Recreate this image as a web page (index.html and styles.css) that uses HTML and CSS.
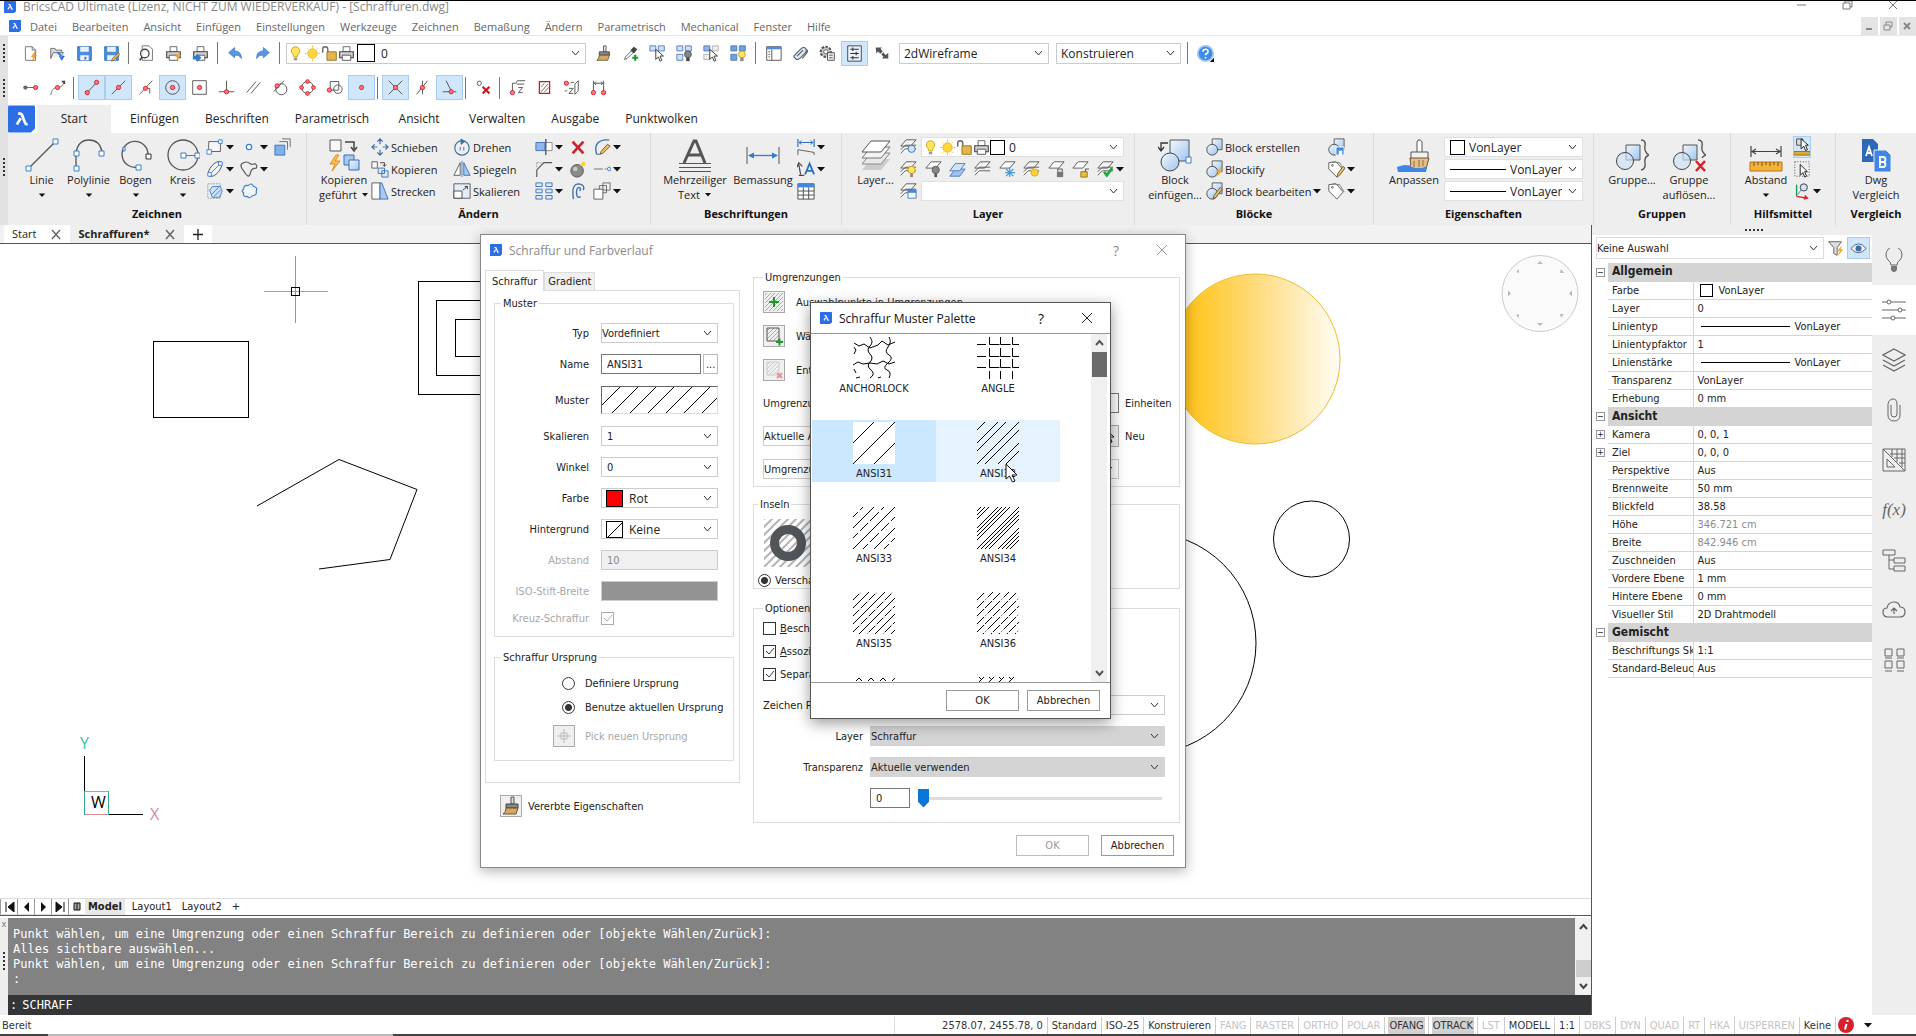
FILE: index.html
```html
<!doctype html>
<html lang="de">
<head>
    <meta charset="utf-8">
    <meta content="width=device-width,initial-scale=1" name="viewport">
    <title>BricsCAD Ultimate - [Schraffuren.dwg]</title>
    <link rel="stylesheet" href="styles.css">
</head>
<body>
<svg class="defs" aria-hidden="true">
    <defs>
        <linearGradient id="gold"><stop offset="0" stop-color="#ffbf0a"/><stop offset=".25" stop-color="#ffcc3c"/><stop offset=".6" stop-color="#fee194"/><stop offset="1" stop-color="#fffdf6"/></linearGradient>
        <linearGradient id="blue" x1="0" y1="0" x2="1" y2="1"><stop offset="0" stop-color="#f2f7fd"/><stop offset="1" stop-color="#9fc4f0"/></linearGradient>
        <pattern id="p-wide" width="18" height="18" patternUnits="userSpaceOnUse"><path d="M0 18L18 0M-1 1L1-1M17 19L19 17" stroke="#000"/></pattern>
        <pattern id="p31" width="21" height="21" patternUnits="userSpaceOnUse"><path d="M0 21L21 0M-1 1L1-1M20 22L22 20" stroke="#000"/></pattern>
        <pattern id="p32" width="21" height="21" patternUnits="userSpaceOnUse"><path d="M0 21L21 0M-1 1L1-1M20 22L22 20M0 8L8 0M8 21L21 8" stroke="#000"/></pattern>
        <pattern id="p33" width="21" height="21" patternUnits="userSpaceOnUse"><path d="M0 21L21 0M-1 1L1-1M20 22L22 20" stroke="#000"/><path d="M0 10L10 0M10 21L21 10" stroke="#000" stroke-dasharray="7 3"/></pattern>
        <pattern id="p34" width="21" height="21" patternUnits="userSpaceOnUse"><path d="M0 21L21 0M-1 1L1-1M20 22L22 20M0 4L4 0M4 21L21 4M0 8L8 0M8 21L21 8M0 12L12 0M12 21L21 12" stroke="#000"/></pattern>
        <pattern id="p35" width="16" height="16" patternUnits="userSpaceOnUse"><path d="M0 16L16 0M-1 1L1-1M15 17L17 15" stroke="#000"/><path d="M0 8L8 0M8 16L16 8" stroke="#000" stroke-dasharray="9 2"/></pattern>
        <pattern id="p36" width="16" height="16" patternUnits="userSpaceOnUse"><path d="M0 16L16 0M0 8L8 0M8 16L16 8" stroke="#000" stroke-dasharray="10 2 1 2"/></pattern>
        <pattern id="p37" width="12" height="12" patternUnits="userSpaceOnUse"><path d="M3 4L6 1L9 4" fill="none" stroke="#000"/></pattern>
        <pattern id="p38" width="10" height="10" patternUnits="userSpaceOnUse"><path d="M2 5L7 0M2 0L5 3" stroke="#000"/></pattern>
        <pattern id="grayhatch" width="8" height="8" patternUnits="userSpaceOnUse"><path d="M0 8L8 0M-1 1L1-1M7 9L9 7" stroke="#b4b4b4" stroke-width="2"/></pattern>
        <pattern id="finehatch" width="4" height="4" patternUnits="userSpaceOnUse"><path d="M0 4L4 0" stroke="#999" stroke-width=".8"/></pattern>
    </defs>
    <symbol id="logo" viewBox="0 0 20 20"><path d="M1 0h18a1 1 0 0 1 1 1v16l-3 3H1a1 1 0 0 1-1-1V1a1 1 0 0 1 1-1z" fill="#2c6ee6"/><path d="M7.500 6h1.500q1 0 1.400 1L12.500 12.500q.4 1.500 2 1.500M9.500 9.500L6.500 14" fill="none" stroke="#fff" stroke-width="2"/></symbol>
    <symbol id="car" viewBox="0 0 8 20"><path d="M0 8h8l-4 4.500z" fill="#111"/></symbol>
    <symbol id="new" viewBox="0 0 20 20"><path d="M4 2h8l4 4v12H4z" fill="#fff" stroke="#666"/><path d="M12 2v4h4" fill="none" stroke="#666"/><path d="M15 8l-4 6h3l-2 5 5-7h-3l3-4z" fill="#f5a623" stroke="#d9822b" stroke-width=".6"/></symbol>
    <symbol id="open" viewBox="0 0 20 20"><path d="M2 16V4h5l1 2h7v3" fill="#d8d8d8" stroke="#666"/><path d="M2 16l3-7h12l-2 3" fill="#eee" stroke="#666"/><path d="M9 9q5-1 6 6m-3-2l3 5 3-5z" fill="#2f7bd8" stroke="#2f7bd8"/></symbol>
    <symbol id="save" viewBox="0 0 20 20"><path d="M2 2h16v16H2z" fill="#4c8edb" stroke="#2464b4"/><path d="M5 2h10v6H5zM5 12h10v6H5z" fill="#e9f2fc"/><path d="M11 14v3" stroke="#2464b4" stroke-width="2"/></symbol>
    <symbol id="saveas" viewBox="0 0 20 20"><path d="M2 2h16v16H2z" fill="#4c8edb" stroke="#2464b4"/><path d="M5 2h10v6H5zM5 12h10v6H5z" fill="#e9f2fc"/><path d="M18 9l-7 7-1 3 3-1 7-7z" fill="#f0b040" stroke="#555" stroke-width=".8"/></symbol>
    <symbol id="preview" viewBox="0 0 20 20"><path d="M5 1h8l4 4v13H5z" fill="#fff" stroke="#666"/><circle cx="8" cy="10" r="5" fill="#fffc" stroke="#444" stroke-width="1.500"/><path d="M5 14l-3 4" stroke="#444" stroke-width="2"/></symbol>
    <symbol id="print" viewBox="0 0 20 20"><path d="M6 2h8v6H6z" fill="#fff" stroke="#555"/><path d="M2 8h16v7H2z" fill="#d4d4d4" stroke="#444" stroke-width="1.300"/><path d="M5 12h10v6H5z" fill="#fff" stroke="#444"/></symbol>
    <symbol id="printf" viewBox="0 0 20 20"><use href="#print"/><path d="M17 8l-5 6h3l-2 5 6-7h-3l2-4z" fill="#f5a623"/></symbol>
    <symbol id="printx" viewBox="0 0 20 20"><use href="#print"/><path d="M1 13h5v-3l5 5-5 5v-3H1z" fill="#2f7bd8"/></symbol>
    <symbol id="undo" viewBox="0 0 20 20"><path d="M2 9l7-6v4q8 0 8 9-3-5-8-4v3z" fill="#5b97e0" stroke="#2f6ac0" stroke-width=".8"/></symbol>
    <symbol id="redo" viewBox="0 0 20 20"><path d="M18 9l-7-6v4q-8 0-8 9 3-5 8-4v3z" fill="#5b97e0" stroke="#2f6ac0" stroke-width=".8"/></symbol>
    <symbol id="bulb" viewBox="0 0 20 20"><path d="M10 2a5 5 0 0 0-3 9l1 3h4l1-3a5 5 0 0 0-3-9z" fill="#ffe45c" stroke="#c79a13"/><path d="M8 15h4v3H8z" fill="#999"/></symbol>
    <symbol id="sun" viewBox="0 0 20 20"><circle cx="10" cy="10" r="5.500" fill="#ffd83a" stroke="#e6a91a"/><path d="M10 1v2M10 17v2M1 10h2M17 10h2M4 4l1 1M15 15l1 1M16 4l-1 1M5 15l-1 1" stroke="#e6a91a"/></symbol>
    <symbol id="lock" viewBox="0 0 20 20"><path d="M2 9V5a3 3 0 0 1 6 0v4" fill="none" stroke="#666" stroke-width="1.600"/><path d="M7 8h11v10H7z" fill="#e6b64c" stroke="#8f6b1c"/></symbol>
    <symbol id="brush" viewBox="0 0 20 20"><path d="M10 1h3v7h-3z" fill="#ddd" stroke="#555"/><path d="M5 8h12v4H5z" fill="#888" stroke="#444"/><path d="M5 12h12l-2 6H2q3-2 3-6z" fill="#d9a860" stroke="#6a5530"/></symbol>
    <symbol id="drop" viewBox="0 0 20 20"><path d="M3 17l1-3 7-7 2 2-7 7z" fill="#fff" stroke="#555"/><path d="M10 6l4-4 4 3-4 5z" fill="#444"/><path d="M12 15h7M15.500 11.500v7" stroke="#1c9a2c" stroke-width="2.500"/></symbol>
    <symbol id="selq" viewBox="0 0 20 20"><path d="M1 1h7v6H1zM11 1h7v6h-7z" fill="#cfe0f5" stroke="#4a78b8"/><path d="M8 5v12l3-3 2 5 2-1-2-5h4z" fill="#fff" stroke="#222"/></symbol>
    <symbol id="selg" viewBox="0 0 20 20"><path d="M1 1h7v6H1z" fill="#8fb5e6" stroke="#4a78b8"/><path d="M11 1h7v6h-7zM1 11h7v6H1z" fill="#eee" stroke="#aaa"/><path d="M8 5v12l3-3 2 5 2-1-2-5h4z" fill="#fff" stroke="#222"/></symbol>
    <symbol id="selb" viewBox="0 0 20 20"><path d="M1 1h7v6H1zM11 1h7v6h-7zM1 11h7v7H1z" fill="#cfe0f5" stroke="#4a78b8"/><circle cx="14" cy="11" r="4" fill="#888" stroke="#444"/><path d="M12 15h4v4h-4z" fill="#444"/></symbol>
    <symbol id="sely" viewBox="0 0 20 20"><path d="M1 1h7v6H1zM11 1h7v6h-7zM1 11h7v7H1z" fill="#6fa1e0" stroke="#4a78b8"/><circle cx="14" cy="11" r="4" fill="#ffe45c" stroke="#c79a13"/><path d="M12 15h4v4h-4z" fill="#888"/></symbol>
    <symbol id="pane" viewBox="0 0 20 20"><path d="M2 2h17v16H2z" fill="#fff" stroke="#444"/><path d="M2 2h17v3H2z" fill="#4c8edb"/><path d="M8 5v13M4 8h2M4 11h2M4 14h2" stroke="#444"/></symbol>
    <symbol id="clip" viewBox="0 0 20 20"><path d="M2 13l9-9q3-2 5 0t0 5l-7 7q-3 2-5 0t-2-3zM6 13l7-7M16 5q4 1 1 5l-5 6" fill="#dbe8f8" stroke="#555" stroke-width="1.200"/></symbol>
    <symbol id="gear" viewBox="0 0 20 20"><circle cx="8" cy="8" r="6" fill="#ccc" stroke="#555" stroke-width="2.500" stroke-dasharray="3 1.500"/><circle cx="8" cy="8" r="2.500" fill="#fff" stroke="#555"/><path d="M10 9h8v9h-8zM12 12h4M12 15h4" fill="#eee" stroke="#444"/></symbol>
    <symbol id="sett" viewBox="0 0 20 20"><path d="M2 1h16v18H2z" fill="#e9f3fd" stroke="#333"/><path d="M5 5h10M5 10h10M5 15h10M8 3v4M12 8v4M8 13v4" stroke="#333" stroke-width="1.300"/></symbol>
    <symbol id="full" viewBox="0 0 20 20"><path d="M1 2h9L8 4l3 4-3 3-4-3-2 3zM19 18h-9l2-3-3-3 3-3 3 4 4-3z" fill="#555"/></symbol>
    <symbol id="help" viewBox="0 0 20 20"><circle cx="10" cy="10" r="9" fill="#3d8bea" stroke="#9cc6f7" stroke-width="2"/><path d="M7 8q0-3 3-3t3 2.500q0 2-3 3.500v1M10 14v2" fill="none" stroke="#fff" stroke-width="2"/><path d="M20 15v5h-5z" fill="#111"/></symbol>
    <!-- snap icons -->
    <symbol id="s1" viewBox="0 0 20 20"><path d="M5 10h10" stroke="#555"/><circle cx="4" cy="10" r="2.500" fill="#666"/><circle cx="16" cy="10" r="2.500" fill="#f77" stroke="#d01525"/></symbol>
    <symbol id="s2" viewBox="0 0 20 20"><path d="M2 19q1-9 8-9 7 0 8-8" fill="none" stroke="#666"/><circle cx="10" cy="10" r="2.500" fill="#f77" stroke="#d01525"/><path d="M15 3h3v3" fill="none" stroke="#444" stroke-width="2"/></symbol>
    <symbol id="s3" viewBox="0 0 20 20"><path d="M5 16L16 4" stroke="#444"/><circle cx="5" cy="16" r="2.500" fill="#f77" stroke="#d01525"/><circle cx="16" cy="4" r="2.500" fill="#f77" stroke="#d01525"/></symbol>
    <symbol id="s4" viewBox="0 0 20 20"><path d="M2 18L18 2" stroke="#444"/><circle cx="10" cy="10" r="2.500" fill="#f77" stroke="#d01525"/></symbol>
    <symbol id="s5" viewBox="0 0 20 20"><path d="M3 18L18 2M10 11h5v6" fill="none" stroke="#444"/><circle cx="10" cy="11" r="2.500" fill="#f77" stroke="#d01525"/></symbol>
    <symbol id="s6" viewBox="0 0 20 20"><circle cx="10" cy="10" r="8" fill="none" stroke="#444"/><circle cx="10" cy="10" r="2.500" fill="#f77" stroke="#d01525"/></symbol>
    <symbol id="s7" viewBox="0 0 20 20"><path d="M2 2h16v16H2z" fill="none" stroke="#444"/><circle cx="10" cy="10" r="2.500" fill="#f77" stroke="#d01525"/></symbol>
    <symbol id="s8" viewBox="0 0 20 20"><path d="M10 2v12M1 15h18" stroke="#444"/><circle cx="10" cy="15" r="2.500" fill="#f77" stroke="#d01525"/></symbol>
    <symbol id="s9" viewBox="0 0 20 20"><path d="M2 16L13 3M7 17L18 4" stroke="#444"/></symbol>
    <symbol id="s10" viewBox="0 0 20 20"><circle cx="11" cy="12" r="6.500" fill="none" stroke="#444"/><path d="M2 15L14 2" stroke="#444"/><circle cx="6" cy="8" r="2.500" fill="#f77" stroke="#d01525"/></symbol>
    <symbol id="s11" viewBox="0 0 20 20"><circle cx="10" cy="10" r="7" fill="none" stroke="#444"/><g fill="#f77" stroke="#d01525"><circle cx="10" cy="3" r="2.200"/><circle cx="10" cy="17" r="2.200"/><circle cx="3" cy="10" r="2.200"/><circle cx="17" cy="10" r="2.200"/></g></symbol>
    <symbol id="s12" viewBox="0 0 20 20"><path d="M5 3h10v10H5z" fill="none" stroke="#444"/><circle cx="14" cy="12" r="5" fill="none" stroke="#444"/><circle cx="4" cy="13" r="2.500" fill="#f77" stroke="#d01525"/></symbol>
    <symbol id="s13" viewBox="0 0 20 20"><circle cx="10" cy="10" r="2.500" fill="#f77" stroke="#d01525"/></symbol>
    <symbol id="s14" viewBox="0 0 20 20"><path d="M2 2l16 16M18 2L2 18" stroke="#444"/><circle cx="10" cy="10" r="2.500" fill="#f77" stroke="#d01525"/></symbol>
    <symbol id="s15" viewBox="0 0 20 20"><path d="M3 18L16 2M10 2v16" stroke="#444"/><circle cx="10" cy="10" r="2.500" fill="#f77" stroke="#d01525"/></symbol>
    <symbol id="s16" viewBox="0 0 20 20"><path d="M6 2l6 12M2 15h8M15 15h3" stroke="#444"/><circle cx="12" cy="15" r="2.500" fill="#f77" stroke="#d01525"/></symbol>
    <symbol id="s17" viewBox="0 0 20 20"><circle cx="5" cy="5" r="2.500" fill="none" stroke="#444"/><path d="M9 9l8 8M17 9l-8 8" stroke="#d01525" stroke-width="2.500"/></symbol>
    <symbol id="s18" viewBox="0 0 20 20"><path d="M4 17V5M4 5h4l2-3h9M9 6h9M11 10h5l-5 6h5" fill="none" stroke="#444"/><circle cx="4" cy="16" r="2.500" fill="#f77" stroke="#d01525"/></symbol>
    <symbol id="s19" viewBox="0 0 20 20"><path d="M4 3h12v14H4z" fill="none" stroke="#d01525" stroke-width="1.500"/><path d="M6 15L14 6M6 9l4-4M10 15l5-5" stroke="#555"/></symbol>
    <symbol id="s20" viewBox="0 0 20 20"><circle cx="4" cy="5" r="2.500" fill="#f77" stroke="#d01525"/><path d="M9 4h4M18 2v12l-4 4V6zM7 11h5l-5 6h5M2 14h3" fill="none" stroke="#444"/></symbol>
    <symbol id="s21" viewBox="0 0 20 20"><path d="M4 2v12M16 2v12M5 5h10M7 3L5 5l2 2M13 3l2 2-2 2" fill="none" stroke="#444"/><circle cx="4" cy="16" r="2.500" fill="#f77" stroke="#d01525"/><circle cx="16" cy="16" r="2.500" fill="#f77" stroke="#d01525"/></symbol>
    <!-- big ribbon icons -->
    <symbol id="line" viewBox="0 0 34 34"><path d="M5 29L29 5" stroke="#555" stroke-width="1.300"/><path d="M1 28h5v5H1zM28 1h5v5h-5z" fill="#fff" stroke="#3b7dd0"/></symbol>
    <symbol id="poly" viewBox="0 0 34 34"><path d="M4 30V15Q6 2 17 2t13 12" fill="none" stroke="#555" stroke-width="1.300"/><path d="M2 28h5v5H2zM2 13h5v5H2zM27 13h5v5h-5z" fill="#fff" stroke="#3b7dd0"/></symbol>
    <symbol id="arc" viewBox="0 0 34 34"><path d="M19 29A13 13 0 1 1 29 17" fill="none" stroke="#555" stroke-width="1.300"/><path d="M27 16h5v5h-5z" fill="#fff" stroke="#333"/><path d="M17 27h5v5h-5zM4 9h2v4H4z" fill="#fff" stroke="#3b7dd0"/></symbol>
    <symbol id="circ" viewBox="0 0 34 34"><circle cx="17" cy="17" r="15" fill="none" stroke="#555" stroke-width="1.300"/><path d="M17 17.500h13" stroke="#3b7dd0"/><path d="M15 15h5v5h-5zM29 15h5v5h-5z" fill="#fff" stroke="#3b7dd0"/></symbol>
    <symbol id="gcopy" viewBox="0 0 34 34"><path d="M3 2h11v11H3z" fill="#f8f8f8" stroke="#555"/><path d="M18 4h9v7m-3-2l3 4 3-4" fill="none" stroke="#444" stroke-width="1.500"/><path d="M9 17l-6 9h5l-3 7 8-10H8l4-6z" fill="#ffc04a" stroke="#e8891c"/><path d="M17 17h10v10H17z" fill="#a9c9ef" stroke="#3b6fb8"/><path d="M22 22h10v10H22z" fill="url(#blue)" stroke="#3b6fb8"/></symbol>
    <symbol id="mtext" viewBox="0 0 34 34"><path d="M6 25L16 3h2l9 22M10 17h13" fill="none" stroke="#555" stroke-width="3"/><path d="M1 25.500h32M1 29.500h32M1 33.500h32" stroke="#555"/></symbol>
    <symbol id="dim" viewBox="0 0 34 34"><path d="M1 9v17M33 9v17" stroke="#555"/><path d="M3 17.500h28" stroke="#2f7bd8" stroke-width="1.300"/><path d="M2 17.500l6-3v6zM32 17.500l-6-3v6z" fill="#2f7bd8"/></symbol>
    <symbol id="layers" viewBox="0 0 34 34"><path d="M3 32L12 21H31L22 32z" fill="#ccc"/><path d="M3 26L12 15H31L22 26z" fill="#e8e8e8" stroke="#888"/><path d="M3 20L12 9H31L22 20z" fill="#f4f4f4" stroke="#777"/><path d="M3 14L12 3H31L22 14z" fill="#fff" stroke="#555"/></symbol>
    <symbol id="blk" viewBox="0 0 34 34"><path d="M12 2h19v21H12z" fill="url(#blue)" stroke="#555"/><circle cx="12" cy="24" r="9" fill="url(#blue)" stroke="#444"/><path d="M10 5H3v7M0 9l3 4 3-4" fill="none" stroke="#333" stroke-width="1.300"/><path d="M28 19h5v6h-5z" fill="#fff" stroke="#3b7dd0"/></symbol>
    <symbol id="match" viewBox="0 0 34 34"><path d="M21 2q3-1 4 2v11h-5V4z" fill="#fff" stroke="#555"/><path d="M14 14h17v8H14z" fill="#f2f2f2" stroke="#555"/><path d="M13 20h19l-3 11H12q3-5 1-11z" fill="#e6bf86" stroke="#6a5530"/><path d="M17 23v6M22 22v7M26 22v6" stroke="#8a6b3c"/><path d="M0 29q10-4 15 0 8 3 15-1l-1 6H1z" fill="#3f87e2"/></symbol>
    <symbol id="grp" viewBox="0 0 34 34"><path d="M11 7h14v15H11z" fill="url(#blue)" stroke="#555"/><circle cx="10" cy="23" r="8.500" fill="#cfe2f8aa" stroke="#444"/><path d="M26 2q5 0 4 6t4 9q-5 2-4 8t-4 7" fill="none" stroke="#555" stroke-width="1.400"/></symbol>
    <symbol id="ungrp" viewBox="0 0 34 34"><path d="M11 7h14v15H11z" fill="url(#blue)" stroke="#555"/><circle cx="10" cy="23" r="8.500" fill="#cfe2f8aa" stroke="#444"/><path d="M26 2q5 0 4 6t4 9q-3 1-4 3" fill="none" stroke="#555" stroke-width="1.400"/><path d="M24 23l9 10M33 23l-9 10" stroke="#d9222a" stroke-width="2.600"/></symbol>
    <symbol id="ruler" viewBox="0 0 34 34"><path d="M2 8v11M32 8v11M3 13.500h28M7 11l-4 2.500 4 2.500M27 11l4 2.500-4 2.500" fill="none" stroke="#444" stroke-width="1.200"/><path d="M1 24h32v9H1z" fill="#f3b23a" stroke="#b5761a"/><path d="M5 24v4M9 24v3M13 24v4M17 24v3M21 24v4M25 24v3M29 24v4" stroke="#7a4d0e"/></symbol>
    <symbol id="cmp" viewBox="0 0 34 34"><path d="M3 1h11l5 5v18H3z" fill="#2e69b8"/><path d="M15 12h12l5 5v17H15z" fill="#3f87e2" stroke="#eee"/><path d="M7 18l3-9 3 9M8 15h4" fill="none" stroke="#fff" stroke-width="1.800"/><path d="M21 19v10h3a2.500 2.500 0 0 0 0-5h-3 3a2.500 2.500 0 0 0 0-5z" fill="none" stroke="#fff" stroke-width="1.800"/></symbol>
    <!-- small ribbon icons -->
    <symbol id="rect" viewBox="0 0 20 20"><path d="M3 4h13v11H3z" fill="#f4f8fd" stroke="#555"/><path d="M1 13h5v5H1zM14 2h4v4h-4z" fill="#fff" stroke="#3b7dd0"/></symbol>
    <symbol id="pt" viewBox="0 0 20 20"><circle cx="10" cy="10" r="3" fill="#fff" stroke="#3b7dd0" stroke-width="1.300"/></symbol>
    <symbol id="stack" viewBox="0 0 20 20"><path d="M9 1h9v9M6 4h9v9" fill="none" stroke="#666"/><path d="M1 8h11v11H1z" fill="#7fb0ea" stroke="#3b6fb8"/></symbol>
    <symbol id="ell" viewBox="0 0 20 20"><ellipse cx="10" cy="10" rx="10" ry="5" transform="rotate(-50 10 10)" fill="#eef4fb" stroke="#555"/><path d="M3 17L17 3" stroke="#3b7dd0"/><path d="M2 14h4v4H2zM14 2h4v4h-4z" fill="#fff" stroke="#3b7dd0"/></symbol>
    <symbol id="spl" viewBox="0 0 20 20"><path d="M4 12Q-2 5 4 3q4-2 7 1 3 2 5 0 4 2 2 5-5 0-6 4-1 5-3 5-3-2-5-6z" fill="none" stroke="#555" stroke-width="1.300"/></symbol>
    <symbol id="hatch" viewBox="0 0 20 20"><path d="M2 2h14v16H2z" fill="none" stroke="#999" stroke-dasharray="2 1"/><path d="M4 9l3-4h9l2 5-3 7H7z" fill="#cfe0f5" stroke="#3b7dd0"/><path d="M6 14l8-8M9 16l7-7" stroke="#3b7dd0"/></symbol>
    <symbol id="cloud" viewBox="0 0 20 20"><path d="M4 8q0-5 5-4 4-4 6 1 5 1 3 5 1 5-4 5-3 4-6 1-5 1-4-4-3-2 0-4z" fill="#f0f6fd" stroke="#3b7dd0" stroke-width="1.300"/></symbol>
    <symbol id="move" viewBox="0 0 20 20"><path d="M10 1v6M10 13v6M1 10h6M13 10h6M7 4l3-3 3 3M7 16l3 3 3-3M4 7l-3 3 3 3M16 7l3 3-3 3" fill="none" stroke="#3b6fa8" stroke-width="1.300"/></symbol>
    <symbol id="copy" viewBox="0 0 20 20"><path d="M1 2h6v7H1z" fill="#fff" stroke="#555"/><path d="M10 3h5v4M13 5l2 2 2-2" fill="none" stroke="#444"/><path d="M8 9h7v6H8zM12 12h7v7h-7z" fill="#dbe9fa" stroke="#3b6fb8"/></symbol>
    <symbol id="stretch" viewBox="0 0 20 20"><path d="M1 1h9v18H1z" fill="#fff" stroke="#555"/><path d="M10 1h2l7 18h-9z" fill="#a9c9ef" stroke="#3b6fb8"/></symbol>
    <symbol id="rot" viewBox="0 0 20 20"><circle cx="10" cy="11" r="8" fill="none" stroke="#3b6fa8" stroke-width="1.300"/><path d="M9 1l4 3-4 3zM8 10v4M12 10v4" fill="#3b6fa8" stroke="#3b6fa8"/></symbol>
    <symbol id="mirror" viewBox="0 0 20 20"><path d="M8 3v14H1z" fill="#fff" stroke="#555"/><path d="M10 1v18" stroke="#3b7dd0"/><path d="M12 3v14h7z" fill="#a9c9ef" stroke="#3b6fb8"/></symbol>
    <symbol id="scale" viewBox="0 0 20 20"><path d="M1 2h18v16H1z" fill="#e4eefa" stroke="#555"/><path d="M1 10h9v8H1z" fill="#fff" stroke="#444"/><path d="M11 9l5-4M13 5h3v3" fill="none" stroke="#333"/></symbol>
    <symbol id="trim" viewBox="0 0 20 20"><path d="M1 5h10v9H1z" fill="#8db9ee" stroke="#3b6fb8"/><path d="M12 5h7v9h-7" fill="#fff" stroke="#888"/><path d="M12 1v18" stroke="#555" stroke-width="1.500"/></symbol>
    <symbol id="xred" viewBox="0 0 20 20"><path d="M4 4l12 13M16 4L4 17" stroke="#c9252d" stroke-width="3"/></symbol>
    <symbol id="fil" viewBox="0 0 20 20"><path d="M4 18q-4-14 9-16h5" fill="none" stroke="#3b6fb8" stroke-width="1.500"/><path d="M4 18h4" stroke="#555"/><path d="M16 7l-7 8-1 3 3-1 8-8z" fill="#f3c069" stroke="#6a5530"/></symbol>
    <symbol id="cham" viewBox="0 0 20 20"><path d="M2 19V11L10 3h9" fill="none" stroke="#555" stroke-width="1.300"/><path d="M2 3h7M2 3v6" stroke="#999" stroke-dasharray="2 1"/></symbol>
    <symbol id="bomb" viewBox="0 0 20 20"><circle cx="9" cy="12" r="7" fill="#8a8a86" stroke="#555"/><circle cx="7" cy="10" r="2.500" fill="#c8c8c8"/><path d="M12 6l3-4 4 1-2 4z" fill="#ffd22e"/></symbol>
    <symbol id="brk" viewBox="0 0 20 20"><path d="M1 10h10M13 10h2" stroke="#666"/><circle cx="18" cy="10" r="2" fill="none" stroke="#3b7dd0"/></symbol>
    <symbol id="arr" viewBox="0 0 20 20"><path d="M1 1h7v4H1zM12 1h7v4h-7zM1 8h7v4H1zM12 8h7v4h-7zM1 15h7v4H1zM12 15h7v4h-7z" fill="#dbe9fa" stroke="#3b6fb8"/></symbol>
    <symbol id="off" viewBox="0 0 20 20"><path d="M5 19q-3-17 6-17 7 1 5 7M9 16q-2-9 2-10 3 1 1 4M9 16q2 2 4 0" fill="none" stroke="#3b6fb8" stroke-width="1.500"/></symbol>
    <symbol id="ord" viewBox="0 0 20 20"><path d="M11 1h8v8h-8zM7 4h8v8H7z" fill="#eee" stroke="#666"/><path d="M1 8h10v11H1z" fill="#fff" stroke="#555"/></symbol>
    <symbol id="dims" viewBox="0 0 20 20"><path d="M1 1v9M19 1v9M3 5h14" stroke="#2f6fc0" stroke-width="1.300"/><path d="M5 3L2 5l3 2M15 3l3 2-3 2" fill="none" stroke="#2f6fc0"/><path d="M1 19v-6l18 3v3" fill="none" stroke="#555"/></symbol>
    <symbol id="ldr" viewBox="0 0 20 20"><path d="M4 16L2 5M0 8l2-5 4 4M2 17h6" fill="none" stroke="#444" stroke-width="1.300"/><path d="M9 16l5-12 5 12M11 12h6" fill="none" stroke="#2f6fc0" stroke-width="2"/></symbol>
    <symbol id="tbl" viewBox="0 0 20 20"><path d="M1 2h18v17H1z" fill="#fff" stroke="#444"/><path d="M1 2h18v4H1z" fill="#3f87e2"/><path d="M1 10h18M1 14.500h18M7 6v13M13 6v13" stroke="#444"/></symbol>
    <symbol id="ly" viewBox="0 0 20 20"><path d="M2 17l5-5h12M2 13l5-5h12M2 9l6-7h11l-6 7z" fill="#fff" fill-opacity=".4" stroke="#555"/></symbol>
    <symbol id="lyq" viewBox="0 0 20 20"><use href="#ly"/><circle cx="14" cy="12" r="4" fill="#cfe2f8" stroke="#3b6fb8"/></symbol>
    <symbol id="lyb" viewBox="0 0 20 20"><use href="#ly"/><circle cx="14" cy="11" r="4" fill="#ffe45c" stroke="#c79a13"/><path d="M12.500 15h3v4h-3z" fill="#888"/></symbol>
    <symbol id="lyg" viewBox="0 0 20 20"><path d="M2 9l6-7h11l-6 7z" fill="#fff" stroke="#555"/><circle cx="13" cy="11" r="4" fill="#888" stroke="#555"/><path d="M11.500 15h3v4h-3z" fill="#555"/></symbol>
    <symbol id="lyblue" viewBox="0 0 20 20"><path d="M2 18l6-8h11l-6 8z" fill="#9fc4f0" stroke="#4878b8"/><path d="M2 12l6-8h11l-6 8z" fill="#cfe2f8" stroke="#4878b8"/></symbol>
    <symbol id="lyf" viewBox="0 0 20 20"><path d="M2 9l6-7h11l-6 7z" fill="#fff" stroke="#555"/><path d="M13 8v11M8 14h11M9 10l8 8M17 10l-8 8" stroke="#3f9be8" stroke-width="1.300"/></symbol>
    <symbol id="lys" viewBox="0 0 20 20"><use href="#ly"/><circle cx="14" cy="14" r="4" fill="#ffd02e" stroke="#e6a91a"/></symbol>
    <symbol id="lyl" viewBox="0 0 20 20"><path d="M2 9l6-7h11l-6 7z" fill="#fff" stroke="#555"/><path d="M11 13h7v6h-7z" fill="#777"/><path d="M12 13v-3h5v3" fill="none" stroke="#444"/></symbol>
    <symbol id="lyu" viewBox="0 0 20 20"><path d="M2 9l6-7h11l-6 7z" fill="#fff" stroke="#555"/><path d="M11 13h7v6h-7z" fill="#e9c235" stroke="#8f6b1c"/><path d="M16 13v-3h4" fill="none" stroke="#444"/></symbol>
    <symbol id="lyc" viewBox="0 0 20 20"><use href="#ly"/><path d="M9 13l3 4 6-8" fill="none" stroke="#1da838" stroke-width="3"/></symbol>
    <symbol id="lyp" viewBox="0 0 20 20"><use href="#ly"/><path d="M10 9h9v9h-9z" fill="#fff" stroke="#3b6fb8"/><path d="M10 9h9v3h-9z" fill="#3f87e2"/></symbol>
    <symbol id="bl" viewBox="0 0 20 20"><path d="M8 1h11v12H8z" fill="url(#blue)" stroke="#555"/><circle cx="8" cy="13" r="6" fill="url(#blue)" stroke="#444"/></symbol>
    <symbol id="blf" viewBox="0 0 20 20"><use href="#bl"/><path d="M17 8l-5 6h3l-2 5 6-7h-3l2-4z" fill="#f5a623"/></symbol>
    <symbol id="ble" viewBox="0 0 20 20"><use href="#bl"/><path d="M17 6l-7 9-1 4 3-2 7-9z" fill="#f3c069" stroke="#6a5530"/></symbol>
    <symbol id="bls" viewBox="0 0 20 20"><use href="#bl"/><path d="M10 10h9v9h-9z" fill="#3f87e2" stroke="#fff"/><path d="M13 14h4v5h-4z" fill="#fff"/></symbol>
    <symbol id="tag" viewBox="0 0 20 20"><path d="M2 3l8-1 8 9-7 8-9-9z" fill="#fff" stroke="#555"/><path d="M6 2l8 1 5 8" fill="none" stroke="#777"/><circle cx="6" cy="6" r="1" fill="none" stroke="#555"/></symbol>
    <symbol id="tage" viewBox="0 0 20 20"><use href="#tag"/><path d="M18 7l-6 8-1 4 3-2 6-8z" fill="#f3c069" stroke="#6a5530"/></symbol>
    <symbol id="mcur" viewBox="0 0 20 20"><path d="M4 1h7v7H4z" fill="#ddd" stroke="#444"/><path d="M9 1v11l3-3 2 5 2-1-2-5h3z" fill="#fff" stroke="#111"/><path d="M1 15h18v4H1z" fill="#e3a83a" stroke="#8f6b1c"/></symbol>
    <symbol id="scur" viewBox="0 0 20 20"><path d="M2 2h16v16H2z" fill="none" stroke="#333" stroke-dasharray="1 2"/><path d="M8 5v12l3-3 2 5 2-1-2-5h3z" fill="#fff" stroke="#111"/></symbol>
    <symbol id="axis" viewBox="0 0 20 20"><path d="M4 3v13" stroke="#1a9d50" stroke-width="1.500"/><path d="M4 16l12 2M13 15l3 3-4 1" fill="none" stroke="#d9222a" stroke-width="1.600"/><circle cx="12" cy="6" r="4" fill="#cfe2f8" stroke="#333"/><path d="M9 9l-4 5" stroke="#3b7dd0"/></symbol>
    <symbol id="filt" viewBox="0 0 20 20"><path d="M2 2h15l-5 7v9l-4-2V9z" fill="#ddd" stroke="#555"/><path d="M18 6l-6 7h3l-2 6 6-8h-3l2-5z" fill="#f5a623"/></symbol>
    <symbol id="eye" viewBox="0 0 20 20"><path d="M1 10q9-11 18 0-9 10-18 0z" fill="#eef" stroke="#456"/><circle cx="10" cy="10" r="3.500" fill="#3d6fa8"/></symbol>
    <!-- side rail -->
    <symbol id="r1" viewBox="0 0 24 24"><path d="M9 17q0-3-3-5a8 8 0 1 1 12 0q-3 2-3 5z" fill="none" stroke="#666"/><path d="M9 18h6v4l-2 2h-2l-2-2z" fill="#777"/></symbol>
    <symbol id="r2" viewBox="0 0 24 24"><path d="M0 4h5M9 4h15M0 12h16M20 12h4M0 20h9M13 20h11" stroke="#666"/><g fill="#fff" stroke="#666"><circle cx="7" cy="4" r="2"/><circle cx="18" cy="12" r="2"/><circle cx="11" cy="20" r="2"/></g></symbol>
    <symbol id="r3" viewBox="0 0 24 24"><path d="M12 1l11 6-11 6L1 7zM1 12l11 6 11-6M1 17l11 6 11-6" fill="none" stroke="#666" stroke-width="1.300"/></symbol>
    <symbol id="r4" viewBox="0 0 24 24"><path d="M9 7v9q0 3 3 3t3-3V6q0-5-4-5T6 6v11q0 6 6 6t6-6V7" fill="none" stroke="#666"/></symbol>
    <symbol id="r5" viewBox="0 0 24 24"><path d="M1 1v22h22zM5 11v8h8zM1 1h22v22M8 6h15M12 10h11M10 1v8M15 1v13M20 1v18M17 15h6" fill="none" stroke="#666"/></symbol>
    <symbol id="r7" viewBox="0 0 24 24"><path d="M1 2h12v5H1zM12 10h11v5H12zM12 18h11v5H12zM7 7v14h5M7 12h5" fill="none" stroke="#666"/></symbol>
    <symbol id="r8" viewBox="0 0 24 24"><path d="M8 19H6q-5 0-5-5 0-4 4-4 1-6 7-6 5 0 6 5 5 0 5 5t-5 5H8M12 16V10M9 13l3-3 3 3" fill="none" stroke="#666" stroke-width="1.200"/></symbol>
    <symbol id="r9" viewBox="0 0 24 24"><path d="M3 1h7v7H3zM15 1h7v7h-7zM3 13h7v7H3zM15 13h7v7h-7zM3 10h7M15 10h7M3 23h7M15 23h7" fill="none" stroke="#666"/></symbol>
</svg>

<header class="titlebar">
    <svg class="logo-s"><use href="#logo"/></svg>
    <span class="title">BricsCAD Ultimate (Lizenz, NICHT ZUM WIEDERVERKAUF) - [Schraffuren.dwg]</span>
    <div class="winbtns">
        <button aria-label="Minimieren"><svg><path d="M1 4h9" stroke="#777"/></svg></button>
        <button aria-label="Wiederherstellen"><svg><path d="M1 2h7v6H1zM3 2V0h7v6H8" fill="none" stroke="#777"/></svg></button>
        <button aria-label="Schließen"><svg><path d="M1 0l8 8M9 0L1 8" stroke="#777"/></svg></button>
    </div>
</header>
<nav class="menubar">
    <svg class="logo-m"><use href="#logo"/></svg>
    <a href="#">Datei</a><a href="#">Bearbeiten</a><a href="#">Ansicht</a><a href="#">Einfügen</a><a href="#">Einstellungen</a><a href="#">Werkzeuge</a><a href="#">Zeichnen</a><a href="#">Bemaßung</a><a href="#">Ändern</a><a href="#">Parametrisch</a><a href="#">Mechanical</a><a href="#">Fenster</a><a href="#">Hilfe</a>
    <div class="mdi">
        <button aria-label="Zeichnung minimieren"><svg><path d="M2 8h6" stroke="#888" stroke-width="2"/></svg></button>
        <button aria-label="Zeichnung verkleinern"><svg><path d="M1 4h6v5H1zM3 4V1h6v5H7" fill="none" stroke="#888"/></svg></button>
        <button aria-label="Zeichnung schließen"><svg><path d="M2 2l6 6M8 2L2 8" stroke="#888" stroke-width="2"/></svg></button>
    </div>
</nav>

<div class="chrome">
    <div class="gutter"><i class="grip"></i><i class="grip"></i><i class="grip ribbon-grip"></i></div>
    <div class="bars">
        <div class="toolbar">
            <button class="tb" title="Neu"><svg><use href="#new"/></svg></button>
            <button class="tb" title="Öffnen"><svg><use href="#open"/></svg></button>
            <button class="tb" title="Speichern"><svg><use href="#save"/></svg></button>
            <button class="tb" title="Speichern unter"><svg><use href="#saveas"/></svg></button>
            <i class="sep"></i>
            <button class="tb" title="Vorschau"><svg><use href="#preview"/></svg></button>
            <button class="tb" title="Drucken"><svg><use href="#printf"/></svg></button>
            <button class="tb" title="Publizieren"><svg><use href="#printx"/></svg></button>
            <i class="sep"></i>
            <button class="tb" title="Zurück"><svg><use href="#undo"/></svg></button>
            <button class="tb" title="Wiederholen"><svg><use href="#redo"/></svg></button>
            <i class="sep"></i>
            <div class="combo layer-combo">
                <svg><use href="#bulb"/></svg><svg><use href="#sun"/></svg><svg><use href="#lock"/></svg><svg><use href="#print"/></svg><i class="swatch"></i>
                <select aria-label="Layer"><option>0</option></select>
            </div>
            <button class="tb" title="Eigenschaften anpassen"><svg><use href="#brush"/></svg></button>
            <button class="tb" title="Pipette"><svg><use href="#drop"/></svg></button>
            <button class="tb" title="Auswahl"><svg><use href="#selq"/></svg></button>
            <button class="tb" title="Verbergen"><svg><use href="#selb"/></svg></button>
            <button class="tb" title="Isolieren"><svg><use href="#selg"/></svg></button>
            <button class="tb" title="Zeigen"><svg><use href="#sely"/></svg></button>
            <i class="sep"></i>
            <button class="tb" title="Explorer"><svg><use href="#pane"/></svg></button>
            <button class="tb" title="Anhänge"><svg><use href="#clip"/></svg></button>
            <button class="tb" title="Optionen"><svg><use href="#gear"/></svg></button>
            <button class="tb on" title="Einstellungen"><svg><use href="#sett"/></svg></button>
            <button class="tb half" title="Vollbild"><svg><use href="#full"/></svg></button>
            <div class="combo style-combo"><select aria-label="Visueller Stil"><option>2dWireframe</option></select></div>
            <div class="combo space-combo"><select aria-label="Arbeitsbereich"><option>Konstruieren</option></select></div>
            <i class="sep"></i>
            <button class="tb" title="Hilfe"><svg><use href="#help"/></svg></button>
        </div>
        <div class="toolbar snaps">
            <button class="tb" title="Temporärer Spurpunkt"><svg><use href="#s1"/></svg></button>
            <button class="tb" title="Von"><svg><use href="#s2"/></svg></button>
            <i class="sep"></i>
            <button class="tb on" title="Endpunkt"><svg><use href="#s3"/></svg></button>
            <button class="tb on" title="Mittelpunkt"><svg><use href="#s4"/></svg></button>
            <button class="tb" title="Nächster"><svg><use href="#s5"/></svg></button>
            <button class="tb on" title="Zentrum"><svg><use href="#s6"/></svg></button>
            <button class="tb" title="Geometrisches Zentrum"><svg><use href="#s7"/></svg></button>
            <button class="tb" title="Lot"><svg><use href="#s8"/></svg></button>
            <button class="tb" title="Parallel"><svg><use href="#s9"/></svg></button>
            <button class="tb" title="Tangente"><svg><use href="#s10"/></svg></button>
            <button class="tb" title="Quadrant"><svg><use href="#s11"/></svg></button>
            <button class="tb" title="Basispunkt"><svg><use href="#s12"/></svg></button>
            <button class="tb on" title="Punkt"><svg><use href="#s13"/></svg></button>
            <i class="sep"></i>
            <button class="tb on" title="Schnittpunkt"><svg><use href="#s14"/></svg></button>
            <button class="tb" title="Angenommener Schnittpunkt"><svg><use href="#s15"/></svg></button>
            <button class="tb on" title="Hilfslinie"><svg><use href="#s16"/></svg></button>
            <i class="sep"></i>
            <button class="tb" title="Fang löschen"><svg><use href="#s17"/></svg></button>
            <i class="sep"></i>
            <button class="tb" title="Z ersetzen"><svg><use href="#s18"/></svg></button>
            <button class="tb" title="Schraffur fangen"><svg><use href="#s19"/></svg></button>
            <button class="tb" title="Negatives Z"><svg><use href="#s20"/></svg></button>
            <button class="tb" title="Hilfslinien"><svg><use href="#s21"/></svg></button>
        </div>
        <nav class="tabs">
            <button class="app" aria-label="BricsCAD"><svg><use href="#logo"/></svg></button>
            <a class="active" href="#">Start</a><a href="#">Einfügen</a><a href="#">Beschriften</a><a href="#">Parametrisch</a><a href="#">Ansicht</a><a href="#">Verwalten</a><a href="#">Ausgabe</a><a href="#">Punktwolken</a>
        </nav>
        <div class="ribbon">
            <section class="panel p-draw">
                <div class="body">
                    <button class="big"><svg><use href="#line"/></svg>Linie<svg class="car"><use href="#car"/></svg></button>
                    <button class="big"><svg><use href="#poly"/></svg>Polylinie<svg class="car"><use href="#car"/></svg></button>
                    <button class="big"><svg><use href="#arc"/></svg>Bogen<svg class="car"><use href="#car"/></svg></button>
                    <button class="big"><svg><use href="#circ"/></svg>Kreis<svg class="car"><use href="#car"/></svg></button>
                    <div class="col">
                        <button class="sm" title="Rechteck"><svg><use href="#rect"/></svg><svg class="car"><use href="#car"/></svg></button>
                        <button class="sm" title="Ellipse"><svg><use href="#ell"/></svg><svg class="car"><use href="#car"/></svg></button>
                        <button class="sm" title="Schraffur"><svg><use href="#hatch"/></svg><svg class="car"><use href="#car"/></svg></button>
                    </div>
                    <div class="col">
                        <button class="sm" title="Punkt"><svg><use href="#pt"/></svg><svg class="car"><use href="#car"/></svg></button>
                        <button class="sm" title="Spline"><svg><use href="#spl"/></svg><svg class="car"><use href="#car"/></svg></button>
                        <button class="sm" title="Revisionswolke"><svg><use href="#cloud"/></svg></button>
                    </div>
                    <div class="col"><button class="sm" title="Region"><svg><use href="#stack"/></svg></button></div>
                </div>
                <h2>Zeichnen</h2>
            </section>
            <section class="panel p-edit">
                <div class="body">
                    <button class="big w54"><svg><use href="#gcopy"/></svg>Kopieren<span>geführt <svg class="car"><use href="#car"/></svg></span></button>
                    <div class="col w82">
                        <button class="sm"><svg><use href="#move"/></svg>Schieben</button>
                        <button class="sm"><svg><use href="#copy"/></svg>Kopieren</button>
                        <button class="sm"><svg><use href="#stretch"/></svg>Strecken</button>
                    </div>
                    <div class="col w82">
                        <button class="sm"><svg><use href="#rot"/></svg>Drehen</button>
                        <button class="sm"><svg><use href="#mirror"/></svg>Spiegeln</button>
                        <button class="sm"><svg><use href="#scale"/></svg>Skalieren</button>
                    </div>
                    <div class="col">
                        <button class="sm" title="Stutzen"><svg><use href="#trim"/></svg><svg class="car"><use href="#car"/></svg></button>
                        <button class="sm" title="Fase"><svg><use href="#cham"/></svg><svg class="car"><use href="#car"/></svg></button>
                        <button class="sm" title="Anordnung"><svg><use href="#arr"/></svg><svg class="car"><use href="#car"/></svg></button>
                    </div>
                    <div class="col w24">
                        <button class="sm" title="Löschen"><svg><use href="#xred"/></svg></button>
                        <button class="sm" title="Ursprung"><svg><use href="#bomb"/></svg></button>
                        <button class="sm" title="Versetzen"><svg><use href="#off"/></svg></button>
                    </div>
                    <div class="col">
                        <button class="sm" title="Polylinie bearbeiten"><svg><use href="#fil"/></svg><svg class="car"><use href="#car"/></svg></button>
                        <button class="sm" title="Bruch"><svg><use href="#brk"/></svg><svg class="car"><use href="#car"/></svg></button>
                        <button class="sm" title="Zeichenreihenfolge"><svg><use href="#ord"/></svg><svg class="car"><use href="#car"/></svg></button>
                    </div>
                </div>
                <h2>Ändern</h2>
            </section>
            <section class="panel p-text">
                <div class="body">
                    <button class="big w68"><svg><use href="#mtext"/></svg>Mehrzeiliger<span>Text <svg class="car"><use href="#car"/></svg></span></button>
                    <button class="big w68"><svg><use href="#dim"/></svg>Bemassung</button>
                    <div class="col">
                        <button class="sm" title="Bemaßungen"><svg><use href="#dims"/></svg><svg class="car"><use href="#car"/></svg></button>
                        <button class="sm" title="Führung"><svg><use href="#ldr"/></svg><svg class="car"><use href="#car"/></svg></button>
                        <button class="sm" title="Tabelle"><svg><use href="#tbl"/></svg></button>
                    </div>
                </div>
                <h2>Beschriftungen</h2>
            </section>
            <section class="panel p-layer">
                <div class="body">
                    <button class="big"><svg><use href="#layers"/></svg>Layer...</button>
                    <div class="col fill">
                        <div class="lrow"><button class="sm" title="Layerstatus"><svg><use href="#lyq"/></svg></button>
                            <div class="combo flat layer-pick"><svg><use href="#bulb"/></svg><svg><use href="#sun"/></svg><svg><use href="#lock"/></svg><svg><use href="#print"/></svg><i class="swatch"></i><select aria-label="Aktueller Layer"><option>0</option></select></div>
                        </div>
                        <div class="lrow spread">
                            <button class="sm" title="Layer ein"><svg><use href="#lyb"/></svg></button>
                            <button class="sm" title="Layer aus"><svg><use href="#lyg"/></svg></button>
                            <button class="sm" title="Layer isolieren"><svg><use href="#lyblue"/></svg></button>
                            <button class="sm" title="Isolation aufheben"><svg><use href="#ly"/></svg></button>
                            <button class="sm" title="Layer frieren"><svg><use href="#lyf"/></svg></button>
                            <button class="sm" title="Layer tauen"><svg><use href="#lys"/></svg></button>
                            <button class="sm" title="Layer sperren"><svg><use href="#lyl"/></svg></button>
                            <button class="sm" title="Layer entsperren"><svg><use href="#lyu"/></svg></button>
                            <button class="sm" title="Layer aktuell"><svg><use href="#lyc"/></svg><svg class="car"><use href="#car"/></svg></button>
                        </div>
                        <div class="lrow"><button class="sm" title="Layerstatus verwalten"><svg><use href="#lyp"/></svg></button>
                            <div class="combo flat"><select aria-label="Layerstatus"><option></option></select></div>
                        </div>
                    </div>
                </div>
                <h2>Layer</h2>
            </section>
            <section class="panel p-block">
                <div class="body">
                    <button class="big w60"><svg><use href="#blk"/></svg>Block<span>einfügen...</span></button>
                    <div class="col w122">
                        <button class="sm"><svg><use href="#bl"/></svg>Block erstellen</button>
                        <button class="sm"><svg><use href="#blf"/></svg>Blockify</button>
                        <button class="sm"><svg><use href="#ble"/></svg>Block bearbeiten <svg class="car"><use href="#car"/></svg></button>
                    </div>
                    <div class="col">
                        <button class="sm" title="Block speichern"><svg><use href="#bls"/></svg></button>
                        <button class="sm" title="Attribut bearbeiten"><svg><use href="#tage"/></svg><svg class="car"><use href="#car"/></svg></button>
                        <button class="sm" title="Attribut"><svg><use href="#tag"/></svg><svg class="car"><use href="#car"/></svg></button>
                    </div>
                </div>
                <h2>Blöcke</h2>
            </section>
            <section class="panel p-prop">
                <div class="body">
                    <button class="big w60"><svg><use href="#match"/></svg>Anpassen</button>
                    <div class="col fill">
                        <div class="lrow"><div class="combo flat"><i class="swatch"></i><select aria-label="Farbe"><option>VonLayer</option></select></div></div>
                        <div class="lrow"><div class="combo flat"><i class="ltype"></i><select class="w76" aria-label="Linientyp"><option>VonLayer</option></select></div></div>
                        <div class="lrow"><div class="combo flat"><i class="ltype"></i><select class="w76" aria-label="Linienstärke"><option>VonLayer</option></select></div></div>
                    </div>
                </div>
                <h2>Eigenschaften</h2>
            </section>
            <section class="panel p-group">
                <div class="body">
                    <button class="big w54"><svg><use href="#grp"/></svg>Gruppe...</button>
                    <button class="big w60"><svg><use href="#ungrp"/></svg>Gruppe<span>auflösen...</span></button>
                </div>
                <h2>Gruppen</h2>
            </section>
            <section class="panel p-util">
                <div class="body">
                    <button class="big w54"><svg><use href="#ruler"/></svg>Abstand<svg class="car"><use href="#car"/></svg></button>
                    <div class="col">
                        <button class="sm on" title="Schnellmessung"><svg><use href="#mcur"/></svg></button>
                        <button class="sm" title="Auswahl"><svg><use href="#scur"/></svg></button>
                        <button class="sm" title="BKS"><svg><use href="#axis"/></svg><svg class="car"><use href="#car"/></svg></button>
                    </div>
                </div>
                <h2>Hilfsmittel</h2>
            </section>
            <section class="panel p-cmp">
                <div class="body">
                    <button class="big w60"><svg><use href="#cmp"/></svg>Dwg<span>Vergleich</span></button>
                </div>
                <h2>Vergleich</h2>
            </section>
        </div>
    </div>
</div>

<div class="workarea">
    <main class="editor">
        <nav class="doctabs">
            <a href="#">Start</a><button aria-label="Start schließen"><svg><path d="M1 1l8 9M9 1L1 10" stroke="#666" stroke-width="1.500"/></svg></button>
            <a class="active" href="#">Schraffuren*</a><button aria-label="Schraffuren schließen"><svg><path d="M1 1l8 9M9 1L1 10" stroke="#666" stroke-width="1.500"/></svg></button>
            <button aria-label="Neuer Tab"><svg><path d="M0 5.500h10M5 0v11" stroke="#222" stroke-width="1.300"/></svg></button>
        </nav>
        <svg class="canvas">
            <g transform="translate(0 -244)" fill="none" stroke="#000" shape-rendering="crispEdges">
                <path d="M264 291.500h64" stroke="#d98a96"/>
                <path d="M295.500 256v67" stroke="#36c49b"/>
                <path d="M291.500 287.500h8v8h-8z"/>
                <path d="M153.500 341.500h95v76h-95z"/>
                <path d="M600 281.500H418.500v113H600M600 300.500H436.500v75H600M600 319.500H455.500v37H600"/>
            </g>
            <g transform="translate(0 -244)" fill="none" stroke="#000">
                <path d="M257 506L339 459.500L417 489.500L390 559.500L319 569"/>
                <circle cx="1255" cy="359" r="85" fill="url(#gold)" stroke="#ecbd2c"/>
                <circle cx="1311.500" cy="539" r="38"/>
                <circle cx="1145" cy="643" r="111"/>
                <circle cx="1540" cy="293.500" r="38" fill="#fafafa" stroke="#ccc"/>
                <path d="M1537 264h6l-3-3zM1537 323h6l-3 3zM1508 290.500v6l3-3zM1572 290.500v6l-3-3zM1516 272l3-3v4zM1561 269l3 4h-4zM1516 315l3 3v-4zM1561 318l3-4h-4z" fill="#bbb" stroke="none"/>
                <path d="M84.500 756v35M108 814.500h35"/>
                <path d="M84.500 814.500h24M84.500 791.500h24" stroke="#d98a96"/>
                <path d="M84.500 791v24M108.500 791v24" stroke="#36a98b"/>
            </g>
            <text x="80" y="505" class="ax-y">Y</text>
            <text x="91" y="564" class="ax-w">W</text>
            <text x="150" y="576" class="ax-x">X</text>
        </svg>
        <nav class="layouts">
            <button aria-label="Erstes Layout"><svg><path d="M3 1v10M11 1v10L5 6z" fill="#111" stroke="#111"/></svg></button>
            <button aria-label="Vorheriges Layout"><svg><path d="M9 1v10L4 6z" fill="#111"/></svg></button>
            <button aria-label="Nächstes Layout"><svg><path d="M4 1v10l5-5z" fill="#111"/></svg></button>
            <button aria-label="Letztes Layout"><svg><path d="M10 1v10M2 1v10l6-5z" fill="#111" stroke="#111"/></svg></button>
            <button aria-label="Layoutliste"><svg><path d="M3 2h6v7H3zM6 2v7" fill="#aaa" stroke="#111"/></svg></button>
            <a class="active" href="#">Model</a><a href="#">Layout1</a><a href="#">Layout2</a><a href="#">+</a>
        </nav>
        <div class="cmd">
            <div class="cmd-gutter"><span>x</span><i class="grip"></i></div>
            <div class="cmd-main">
                <div class="cmd-log">
                    <pre>Punkt wählen, um eine Umgrenzung oder einen Schraffur Bereich zu definieren oder [objekte Wählen/Zurück]:
Alles sichtbare auswählen...
Punkt wählen, um eine Umgrenzung oder einen Schraffur Bereich zu definieren oder [objekte Wählen/Zurück]:
:</pre>
                    <div class="scroll">
                        <svg><path d="M3 8l3.500-4L10 8" fill="none" stroke="#444" stroke-width="2"/></svg>
                        <i class="thumb"></i>
                        <svg><path d="M3 4l3.500 4L10 4" fill="none" stroke="#444" stroke-width="2"/></svg>
                    </div>
                </div>
                <div class="cmd-line"><label for="cmdin">:</label><input id="cmdin" type="text" value="SCHRAFF"></div>
            </div>
        </div>
    </main>
    <aside class="side">
        <div class="side-grip"><i></i></div>
        <div class="side-body">
            <div class="props">
                <div class="pick">
                    <select aria-label="Auswahl"><option>Keine Auswahl</option></select>
                    <button title="Filter"><svg><use href="#filt"/></svg></button>
                    <button class="on" title="Anzeigen"><svg><use href="#eye"/></svg></button>
                </div>
                <table>
                    <colgroup><col class="c-tree"><col class="c-name"><col></colgroup>
                    <tbody>
                    <tr class="head"><td><i class="box">−</i></td><th colspan="2">Allgemein</th></tr>
                    <tr><td></td><th>Farbe</th><td><i class="swatch"></i>VonLayer</td></tr>
                    <tr><td></td><th>Layer</th><td>0</td></tr>
                    <tr><td></td><th>Linientyp</th><td><i class="ltype"></i>VonLayer</td></tr>
                    <tr><td></td><th>Linientypfaktor</th><td>1</td></tr>
                    <tr><td></td><th>Linienstärke</th><td><i class="ltype"></i>VonLayer</td></tr>
                    <tr><td></td><th>Transparenz</th><td>VonLayer</td></tr>
                    <tr><td></td><th>Erhebung</th><td>0 mm</td></tr>
                    <tr class="head"><td><i class="box">−</i></td><th colspan="2">Ansicht</th></tr>
                    <tr><td><i class="box">+</i></td><th>Kamera</th><td>0, 0, 1</td></tr>
                    <tr><td><i class="box">+</i></td><th>Ziel</th><td>0, 0, 0</td></tr>
                    <tr><td></td><th>Perspektive</th><td>Aus</td></tr>
                    <tr><td></td><th>Brennweite</th><td>50 mm</td></tr>
                    <tr><td></td><th>Blickfeld</th><td>38.58</td></tr>
                    <tr><td></td><th>Höhe</th><td class="ro">346.721 cm</td></tr>
                    <tr><td></td><th>Breite</th><td class="ro">842.946 cm</td></tr>
                    <tr><td></td><th>Zuschneiden</th><td>Aus</td></tr>
                    <tr><td></td><th>Vordere Ebene</th><td>1 mm</td></tr>
                    <tr><td></td><th>Hintere Ebene</th><td>0 mm</td></tr>
                    <tr><td></td><th>Visueller Stil</th><td>2D Drahtmodell</td></tr>
                    <tr class="head"><td><i class="box">−</i></td><th colspan="2">Gemischt</th></tr>
                    <tr><td></td><th>Beschriftungs Ska</th><td>1:1</td></tr>
                    <tr><td></td><th>Standard-Beleuch</th><td>Aus</td></tr>
                    </tbody>
                </table>
            </div>
            <nav class="rail">
                <button title="Tipps"><svg><use href="#r1"/></svg></button>
                <button class="on" title="Eigenschaften"><svg><use href="#r2"/></svg></button>
                <button title="Layer"><svg><use href="#r3"/></svg></button>
                <button title="Anhänge"><svg><use href="#r4"/></svg></button>
                <button title="Werkzeugpaletten"><svg><use href="#r5"/></svg></button>
                <button class="fx">f(x)</button>
                <button title="Struktur"><svg><use href="#r7"/></svg></button>
                <button title="Cloud"><svg><use href="#r8"/></svg></button>
                <button title="Bibliothek"><svg><use href="#r9"/></svg></button>
            </nav>
        </div>
    </aside>
</div>

<footer class="status">
    <span class="ready">Bereit</span>
    <span class="coords">2578.07, 2455.78, 0</span>
    <button>Standard</button><button>ISO-25</button><button>Konstruieren</button>
    <button class="dim">FANG</button><button class="dim">RASTER</button><button class="dim">ORTHO</button><button class="dim">POLAR</button>
    <button class="on"><b>OFANG</b></button><button class="on"><b>OTRACK</b></button><button class="dim">LST</button>
    <button>MODELL</button><button>1:1</button>
    <button class="dim">DBKS</button><button class="dim">DYN</button><button class="dim">QUAD</button><button class="dim">RT</button><button class="dim">HKA</button><button class="dim">UISPERREN</button>
    <button>Keine</button>
    <button class="info" aria-label="Hinweise"><svg viewBox="0 0 16 16"><circle cx="8" cy="8" r="8" fill="#d8202c"/><path d="M9.500 3v2M8.500 7L7 12.500" stroke="#fff" stroke-width="2"/></svg></button>
    <button class="more" aria-label="Mehr"><svg class="car"><use href="#car"/></svg></button>
</footer>
<div class="taskline"><i></i></div>

<div class="dialog hatch-dlg" role="dialog" aria-label="Schraffur und Farbverlauf">
    <div class="dlg-title muted"><svg class="logo-s"><use href="#logo"/></svg><span>Schraffur und Farbverlauf</span>
        <button aria-label="Hilfe">?</button><button aria-label="Schließen"><svg><path d="M1 1l10 10M11 1L1 11" stroke="#999"/></svg></button></div>
    <div class="dlg-body">
        <div class="left">
            <nav class="dlg-tabs"><button class="active">Schraffur</button><button>Gradient</button></nav>
            <div class="page">
                <fieldset class="pattern">
                    <legend>Muster</legend>
                    <label for="typ">Typ</label><select id="typ" class="field tight"><option>Vordefiniert</option></select>
                    <label for="name">Name</label><div class="namebox"><input id="name" class="field" type="text" value="ANSI31"><button>...</button></div>
                    <label for="sample">Muster</label><button id="sample" class="sample"><svg><rect width="100%" height="100%" fill="url(#p-wide)"/></svg></button>
                    <label for="skal">Skalieren</label><select id="skal" class="field"><option>1</option></select>
                    <label for="wink">Winkel</label><select id="wink" class="field"><option>0</option></select>
                    <label for="farb">Farbe</label><div class="combo field-combo"><i class="swatch red"></i><select id="farb"><option>Rot</option></select></div>
                    <label for="hint">Hintergrund</label><div class="combo field-combo"><svg class="none"><path d="M0 16L16 0" stroke="#000"/></svg><select id="hint"><option>Keine</option></select></div>
                    <label for="abst" class="off">Abstand</label><input id="abst" class="field" type="text" value="10" disabled>
                    <label for="iso" class="off">ISO-Stift-Breite</label><input id="iso" class="field dark" type="text" disabled>
                    <label for="kreuz" class="off">Kreuz-Schraffur</label><input id="kreuz" type="checkbox" checked disabled>
                </fieldset>
                <fieldset class="origin">
                    <legend>Schraffur Ursprung</legend>
                    <div class="choices">
                        <input id="o1" name="origin" type="radio"><label for="o1">Definiere Ursprung</label>
                        <input id="o2" name="origin" type="radio" checked><label for="o2">Benutze aktuellen Ursprung</label>
                        <button id="o3" class="icon" disabled><svg viewBox="0 0 20 20"><path d="M10 3v14M3 10h14M7 7h6v6H7z" fill="none" stroke="#bbb"/></svg></button><label for="o3" class="off">Pick neuen Ursprung</label>
                    </div>
                </fieldset>
            </div>
            <div class="inherit"><button id="inh" class="icon"><svg><use href="#brush"/></svg></button><label for="inh">Vererbte Eigenschaften</label></div>
        </div>
        <div class="right">
            <fieldset class="bounds">
                <legend>Umgrenzungen</legend>
                <div class="row"><button id="b1" class="icon"><svg viewBox="0 0 20 20"><path d="M1 1h18v18H1z" fill="url(#finehatch)"/><path d="M5 10h10M10 5v10" stroke="#1c9a2c" stroke-width="2"/></svg></button><label for="b1">Auswahlpunkte in Umgrenzungen</label></div>
                <div class="row"><button id="b2" class="icon"><svg viewBox="0 0 20 20"><path d="M3 2h12v13H3z" fill="url(#finehatch)" stroke="#555"/><path d="M12 16h7M15.500 12.500v7" stroke="#1c9a2c" stroke-width="2"/></svg></button><label for="b2">Wähle Umgrenzungs Objekte</label></div>
                <div class="row"><button id="b3" class="icon" disabled><svg viewBox="0 0 20 20" opacity=".5"><path d="M3 2h12v13H3z" fill="url(#finehatch)" stroke="#aaa"/><path d="M13 13l5 5M18 13l-5 5" stroke="#f0304a" stroke-width="2"/></svg></button><label for="b3">Entferne Umgrenzungen</label></div>
                <div class="row"><label for="tol" class="grow">Umgrenzungs Lücken Toleranz</label><input id="tol" class="field w100" type="text" value="0"><span class="unit">Einheiten</span></div>
                <div class="row"><select class="field grow tight" aria-label="Umgrenzungssatz"><option>Aktuelle Ansicht</option></select><button id="neu" class="icon"><svg viewBox="0 0 20 20"><path d="M6 2v13l4-3 2 5 2-1-2-5h4z" fill="#fff" stroke="#111"/></svg></button><label for="neu" class="unit">Neu</label></div>
                <div class="row"><select class="field grow tight" aria-label="Umgrenzungstyp"><option>Umgrenzungen beibehalten</option></select><span class="unit"></span></div>
            </fieldset>
            <fieldset class="islands">
                <legend>Inseln</legend>
                <svg class="ring" viewBox="0 0 48 48"><path d="M0 0h48v48H0z" fill="url(#grayhatch)"/><circle cx="24" cy="24" r="13.500" fill="none" stroke="#50555a" stroke-width="9"/></svg>
                <div class="row"><input id="isl" type="radio" checked><label for="isl">Verschachtelt</label></div>
            </fieldset>
            <fieldset class="options">
                <legend>Optionen</legend>
                <div class="row"><input id="c1" type="checkbox"><label for="c1"><u>B</u>eschriftung</label></div>
                <div class="row"><input id="c2" type="checkbox" checked><label for="c2"><u>A</u>ssoziativ</label></div>
                <div class="row"><input id="c3" type="checkbox" checked><label for="c3">Separate Schraffuren</label></div>
                <div class="opts">
                    <label for="zr">Zeichen Reihenfolge</label><select id="zr" class="field tight"><option>Hinter Umgrenzung</option></select>
                    <label for="ly2">Layer</label><select id="ly2" class="field tight gray"><option>Schraffur</option></select>
                    <label for="tr">Transparenz</label><select id="tr" class="field tight gray"><option>Aktuelle verwenden</option></select>
                    <span></span><div class="slide"><input class="field" type="text" value="0" aria-label="Transparenzwert"><input type="range" value="0" aria-label="Transparenz"></div>
                </div>
            </fieldset>
        </div>
    </div>
    <div class="dlg-foot"><button class="btn" disabled>OK</button><button class="btn">Abbrechen</button></div>
</div>

<div class="dialog palette-dlg" role="dialog" aria-label="Schraffur Muster Palette">
    <div class="dlg-title"><svg class="logo-s"><use href="#logo"/></svg><span>Schraffur Muster Palette</span>
        <button aria-label="Hilfe">?</button><button aria-label="Schließen"><svg><path d="M1 1l10 10M11 1L1 11" stroke="#222"/></svg></button></div>
    <div class="list">
        <div class="cells">
            <button><svg><path d="M1 6l5 3 5-2 6 4 8-3 4-4 6 4 7-3M0 28l5-3 5 2 7-1 7 1 6-3 6 3 6-2M17 0q4 5 0 9t0 8 0 8 1 8-1 8M36 0q3 5-1 10t1 8-1 8-1 7 2 8M1 10l2 3-2 4M1 32l2 4M3 41l4-1M25 41l3-1" fill="none" stroke="#000"/></svg>ANCHORLOCK</button>
            <button><svg><path d="M0 7.500h9M0 19.500h9M0 30.500h9M12.500 0v7.500h10M23.500 0v7.500h10M35.500 0v7.500h7M12.500 11v8.500h10M23.500 11v8.500h10M35.500 11v8.500h7M12.500 22v8.500h10M23.500 22v8.500h10M35.500 22v8.500h7M12.500 34v8M23.500 34v8M35.500 34v8" fill="none" stroke="#000"/></svg>ANGLE</button>
            <button class="sel"><svg><rect width="42" height="42" fill="#fff"/><rect width="42" height="42" fill="url(#p31)"/></svg>ANSI31</button>
            <button class="hov"><svg><rect width="42" height="42" fill="url(#p32)"/></svg>ANSI32</button>
            <button><svg><rect width="42" height="42" fill="url(#p33)"/></svg>ANSI33</button>
            <button><svg><rect width="42" height="42" fill="url(#p34)"/></svg>ANSI34</button>
            <button><svg><rect width="42" height="42" fill="url(#p35)"/></svg>ANSI35</button>
            <button><svg><rect width="42" height="42" fill="url(#p36)"/></svg>ANSI36</button>
            <button aria-label="ANSI37"><svg><rect width="42" height="42" fill="url(#p37)"/></svg></button>
            <button aria-label="ANSI38"><svg><rect width="42" height="42" fill="url(#p38)"/></svg></button>
        </div>
        <div class="scroll">
            <svg><path d="M3 8l3.500-4L10 8" fill="none" stroke="#555" stroke-width="2"/></svg>
            <i class="thumb"></i>
            <svg><path d="M3 4l3.500 4L10 4" fill="none" stroke="#555" stroke-width="2"/></svg>
        </div>
    </div>
    <div class="dlg-foot"><button class="btn">OK</button><button class="btn">Abbrechen</button></div>
</div>
<svg class="cursor" viewBox="0 0 14 20"><path d="M1 1v15l3.500-3 3 6 2.500-1-3-6H12z" fill="#fff" stroke="#111"/></svg>
</body>
</html>
```

FILE: styles.css
```css
* {
    box-sizing: border-box;
}

body {
    margin: 0;
    height: 100vh;
    display: flex;
    flex-direction: column;
    overflow: hidden;
    background: #fff;
    color: #222;
    font-family: "DejaVu Sans Condensed", "Noto Sans", sans-serif;
    font-size: 11px;
}

button {
    font: inherit;
    color: inherit;
    padding: 0;
    border: 0;
    background: none;
}

a {
    color: inherit;
    text-decoration: none;
}

i {
    font-style: normal;
}

svg {
    display: block;
    flex: none;
}

.defs {
    position: absolute;
    width: 0;
    height: 0;
}

select, input {
    font: inherit;
    color: inherit;
    margin: 0;
}

select {
    appearance: none;
    min-width: 0;
    border: 0;
    padding: 0 20px 0 4px;
    background: url("data:image/svg+xml,%3Csvg xmlns='http://www.w3.org/2000/svg' width='9' height='6'%3E%3Cpath d='M1 1l3.500 4L8 1' fill='none' stroke='%23333'/%3E%3C/svg%3E") no-repeat right 5px center;
}

.car {
    width: 8px;
    height: 20px;
}

.swatch {
    flex: none;
    width: 15px;
    height: 15px;
    border: 1px solid #000;
    background: #fff;
}

.ltype {
    flex: 1;
    height: 1px;
    background: #000;
}

/* title and menu */
.titlebar {
    height: 14px;
    display: flex;
    align-items: flex-start;
    border-top: 1px solid #000;
    padding-left: 4px;
    overflow: hidden;
    font-family: "Open Sans", sans-serif;
    font-size: 12px;
    color: #888;
}

.logo-s {
    width: 12px;
    height: 12px;
}

.title {
    flex: 1;
    margin-left: 7px;
    line-height: 12px;
}

.winbtns {
    display: flex;
}

.winbtns button {
    width: 46px;
    height: 10px;
    display: grid;
    place-items: center;
}

.winbtns svg, .mdi svg {
    width: 11px;
    height: 11px;
}

.menubar {
    height: 22px;
    display: flex;
    align-items: center;
    gap: 15px;
    padding: 3px 0 0 9px;
    border-bottom: 1px solid #e8e8e8;
    font-family: "Open Sans", sans-serif;
    color: #666;
}

.logo-m {
    width: 12px;
    height: 14px;
    margin-right: -6px;
}

.mdi {
    margin-left: auto;
    display: flex;
    gap: 2px;
}

.mdi button {
    width: 17px;
    height: 18px;
    display: grid;
    place-items: center;
    background: #e4e4e4;
}

/* toolbars */
.chrome {
    display: flex;
}

.gutter {
    width: 8px;
    padding-top: 8px;
    background: #e2e2e2;
    display: flex;
    flex-direction: column;
    align-items: center;
    gap: 17px;
}

.grip {
    width: 2px;
    height: 18px;
    background: repeating-linear-gradient(#333 0 2px, transparent 2px 4px);
}

.ribbon-grip {
    margin-top: 44px;
}

.bars {
    flex: 1;
    min-width: 0;
}

.toolbar {
    height: 34px;
    display: flex;
    align-items: center;
    padding-left: 9px;
}

.tb {
    width: 27px;
    height: 25px;
    display: grid;
    place-items: center;
}

.tb svg {
    width: 17px;
    height: 17px;
}

.half svg {
    width: 14px;
    height: 14px;
}

.on {
    background: #cfe6fb;
    outline: 1px solid #a9cdf0;
    outline-offset: -1px;
}

.sep {
    width: 1px;
    height: 22px;
    margin: 0 4px 0 3px;
    background: #777;
}

.combo {
    height: 21px;
    display: flex;
    align-items: center;
    border: 1px solid #ccc;
    background: #fff;
    font-family: "Open Sans", sans-serif;
    font-size: 12px;
}

.combo select {
    flex: 1;
    height: 19px;
}

.combo svg {
    width: 17px;
    height: 17px;
}

.layer-combo {
    width: 300px;
    margin: 0 4px 0 2px;
}

.layer-combo .swatch {
    width: 18px;
    height: 18px;
    margin: 0 2px;
}

.style-combo {
    width: 150px;
    margin: 0 7px 0 4px;
}

.space-combo {
    width: 125px;
    margin-right: 3px;
}

.snaps {
    height: 35px;
}

.snaps .sep {
    margin-left: 2px;
}

/* ribbon */
.tabs {
    height: 28px;
    display: flex;
    font-family: "Open Sans", sans-serif;
    font-size: 12px;
}

.tabs a {
    min-width: 74px;
    padding: 0 13px;
    line-height: 28px;
    text-align: center;
}

.tabs .active {
    background: #eee;
    margin-right: 6px;
}

.app {
    margin-right: 2px;
}

.app svg {
    width: 27px;
    height: 28px;
}

.ribbon {
    height: 92px;
    display: flex;
    background: #eee;
    font-family: "Open Sans", sans-serif;
}

.panel {
    min-width: 0;
    padding-top: 3px;
    border-right: 1px solid #dadada;
}

.panel:last-child {
    border-right: 0;
}

.panel h2 {
    margin: 0;
    font-size: 11px;
    line-height: 20px;
    text-align: center;
    color: #111;
}

.body {
    height: 68px;
    display: flex;
    padding: 0 10px;
}

.p-draw {
    flex: 1 1 299px;
}

.p-edit {
    flex: 1 1 344px;
}

.p-text {
    flex: 1 1 191px;
}

.p-layer {
    flex: 1 1 293px;
}

.p-block {
    flex: 1 1 239px;
}

.p-prop {
    flex: 1 1 220px;
}

.p-group {
    flex: 1 1 137px;
}

.p-util {
    flex: 1 1 105px;
}

.p-cmp {
    flex: 1 1 80px;
}

.p-group .body, .p-util .body, .p-cmp .body {
    padding: 0;
    justify-content: center;
}

.big {
    width: 47px;
    display: flex;
    flex: none;
    flex-direction: column;
    align-items: center;
    line-height: 15px;
    padding-top: 2px;
}

.big > svg:first-child {
    width: 34px;
    height: 34px;
}

.big > .car {
    height: 16px;
}

.big span {
    display: flex;
    align-items: center;
    gap: 4px;
}

.big span .car {
    height: 15px;
}

.w54 {
    width: 54px;
}

.w60 {
    width: 60px;
}

.w68 {
    width: 68px;
}

.col {
    flex: none;
    width: 34px;
}

.col.w82 {
    width: 82px;
}

.col.w24 {
    width: 24px;
}

.col.w122 {
    width: 122px;
}

.col.fill {
    flex: 1;
    min-width: 0;
}

.sm {
    height: 22px;
    display: flex;
    align-items: center;
    gap: 2px;
    white-space: nowrap;
}

.sm svg {
    width: 18px;
    height: 18px;
}

.sm .car {
    width: 8px;
    height: 20px;
}

.lrow {
    height: 22px;
    display: flex;
    align-items: center;
    gap: 4px;
}

.spread {
    justify-content: space-between;
}

.flat {
    flex: 1;
    min-width: 0;
    height: 20px;
    border-color: #e0e0e0;
    padding-left: 5px;
}

.layer-pick {
    padding-left: 0;
}

.flat .ltype + select {
    flex: none;
}

.w76 {
    width: 76px;
}

/* work area */
.workarea {
    flex: 1;
    min-height: 0;
    display: flex;
}

.editor {
    flex: 1;
    min-width: 0;
    display: flex;
    flex-direction: column;
    border-right: 1px solid #555;
}

.doctabs {
    height: 19px;
    display: flex;
    align-items: center;
    padding-left: 4px;
    background: #f2f2f2;
    border-bottom: 1px solid #555;
    font-family: "Open Sans", sans-serif;
}

.doctabs a, .doctabs button {
    height: 18px;
    line-height: 18px;
    background: #fff;
    padding: 0 6px 0 8px;
}

.doctabs .active, .doctabs .active + button {
    background: #eee;
    font-weight: bold;
}

.doctabs button {
    width: 28px;
    padding: 0;
    display: grid;
    place-items: center;
}

.doctabs svg {
    width: 10px;
    height: 11px;
}

.canvas {
    flex: 1;
    width: 100%;
    min-height: 0;
}

.ax-y, .ax-x, .ax-w {
    font-family: "Open Sans", sans-serif;
    font-size: 16px;
    fill: #36c49b;
}

.ax-x {
    fill: #d98a96;
}

.ax-w {
    fill: #000;
}

.layouts {
    height: 18px;
    display: flex;
    align-items: center;
    border-top: 1px solid #ddd;
    border-bottom: 1px solid #555;
}

.layouts button {
    width: 17px;
    height: 16px;
    display: grid;
    place-items: center;
    border-left: 1px solid #999;
    border-bottom: 1px solid #ddd;
}

.layouts svg {
    width: 13px;
    height: 12px;
}

.layouts a {
    padding: 0 3px;
    margin-right: 4px;
    line-height: 16px;
}

.layouts .active {
    background: #e8e8e8;
    font-weight: bold;
}

.cmd {
    height: 99px;
    display: flex;
    padding-top: 2px;
}

.cmd-gutter {
    width: 8px;
    background: #eee;
    font-size: 9px;
    line-height: 12px;
    color: #777;
    display: flex;
    flex-direction: column;
    align-items: center;
    gap: 22px;
}

.cmd-main {
    flex: 1;
    min-width: 0;
}

.cmd-log {
    height: 77px;
    display: flex;
    background: #828282;
    color: #fff;
}

.cmd-log pre {
    flex: 1;
    margin: 0;
    padding: 9px 5px 0;
    font: 12px/15px "DejaVu Sans Mono", monospace;
}

.scroll {
    width: 16px;
    background: #f0f0f0;
    display: flex;
    flex-direction: column;
    align-items: center;
}

.scroll svg {
    width: 13px;
    height: 12px;
    margin: 3px 0;
}

.scroll .thumb {
    width: 15px;
    height: 17px;
    margin-top: auto;
    background: #cdcdcd;
}

.cmd-line {
    height: 20px;
    display: flex;
    align-items: center;
    padding-left: 2px;
    background: #333537;
    color: #fff;
    font: 12px "DejaVu Sans Mono", monospace;
}

.cmd-line input {
    flex: 1;
    border: 0;
    padding: 0 5px;
    background: none;
    color: #fff;
}

/* properties */
.side {
    width: 324px;
    display: flex;
    flex-direction: column;
    background: #eee;
}

.side-grip {
    height: 10px;
    display: grid;
    place-items: center;
}

.side-grip i {
    width: 18px;
    height: 2px;
    background: repeating-linear-gradient(90deg, #333 0 2px, transparent 2px 4px);
}

.side-body {
    flex: 1;
    display: flex;
    min-height: 0;
}

.props {
    flex: 1;
    min-width: 0;
    padding-left: 4px;
    background: #fff;
}

.pick {
    height: 28px;
    display: flex;
    padding: 2px 2px 0 0;
}

.pick select {
    flex: 1;
    height: 22px;
    border: 1px solid #ddd;
    padding-left: 0;
}

.pick button {
    width: 23px;
    height: 22px;
    display: grid;
    place-items: center;
}

.pick button svg {
    width: 17px;
    height: 17px;
}

.props table {
    width: 100%;
    table-layout: fixed;
    border-collapse: collapse;
}

.c-tree {
    width: 12px;
}

.c-name {
    width: 85px;
}

.props tr {
    height: 18px;
}

.props td, .props th {
    padding: 0 4px;
    height: 18px;
    line-height: 17px;
    border-bottom: 1px solid #d4d4d4;
    text-align: left;
    font-weight: normal;
    white-space: nowrap;
    overflow: hidden;
}

.props tr > :first-child {
    padding: 0;
    border-bottom: 0;
}

.props th {
    padding-right: 0;
    border-right: 1px solid #d4d4d4;
}

.props .head th {
    background: #d4d4d4;
    font-weight: bold;
    font-size: 12px;
}

.props .ro {
    color: #8c8c8c;
}

.props .swatch {
    display: inline-block;
    width: 13px;
    height: 13px;
    margin: 0 6px 0 2px;
    vertical-align: middle;
}

.props .ltype {
    display: inline-block;
    width: 89px;
    margin: 0 5px 0 3px;
    vertical-align: middle;
}

.box {
    display: block;
    width: 9px;
    height: 9px;
    border: 1px solid #999;
    font-size: 9px;
    line-height: 7px;
    text-align: center;
}

.rail {
    width: 44px;
    background: #eee;
}

.rail button {
    width: 100%;
    height: 50px;
    display: grid;
    place-items: center;
}

.rail svg {
    width: 24px;
    height: 24px;
}

.rail .on {
    background: #fff;
    outline: 0;
}

.rail .fx {
    font: italic 17px "Liberation Serif", serif;
    color: #666;
}

/* status bar */
.status {
    height: 19px;
    display: flex;
    align-items: center;
    padding: 1px 40px 0 0;
    color: #333;
    line-height: 17px;
}

.ready {
    flex: 1;
    padding-left: 2px;
}

.coords {
    width: 153px;
    text-align: right;
    padding-right: 4px;
    border-left: 1px solid #ddd;
}

.status button {
    padding: 0 4px;
    border-left: 1px solid #ccc;
    line-height: 17px;
}

.status .dim {
    color: #c4c4c4;
}

.status .on {
    background: none;
    outline: 0;
    padding: 0 3px;
}

.status b {
    display: block;
    font-weight: normal;
    background: #d2d2d2;
    padding: 0 1px;
}

.status .info {
    padding: 0 2px;
}

.status .info svg {
    width: 16px;
    height: 16px;
}

.status .more {
    border: 0;
    padding-left: 8px;
}

.taskline {
    height: 2px;
    background: #444;
}

.taskline i {
    display: block;
    width: 18%;
    height: 2px;
    margin-left: 48px;
    background: #bbb;
}

/* dialogs */
.dialog {
    position: absolute;
    display: flex;
    flex-direction: column;
    border: 1px solid #888;
    background: #fff;
    box-shadow: 0 3px 12px rgba(0, 0, 0, .3);
}

.hatch-dlg {
    left: 480px;
    top: 234px;
    width: 706px;
    height: 634px;
}

.palette-dlg {
    left: 810px;
    top: 302px;
    width: 301px;
    height: 417px;
    border-color: #555;
    box-shadow: 0 4px 14px rgba(0, 0, 0, .4);
}

.dlg-title {
    height: 30px;
    display: flex;
    align-items: center;
    padding-left: 9px;
    font-family: "Open Sans", sans-serif;
    font-size: 12px;
    color: #111;
}

.dlg-title span {
    flex: 1;
    margin-left: 7px;
}

.dlg-title button {
    width: 46px;
    height: 30px;
    display: grid;
    place-items: center;
    font-size: 14px;
}

.dlg-title svg:not(.logo-s) {
    width: 12px;
    height: 12px;
}

.dlg-title.muted {
    color: #8a8a8a;
}

.dlg-body {
    display: grid;
    grid-template-columns: 255fr 427fr;
    gap: 13px;
    padding: 5px 5px 0 4px;
}

.dlg-tabs {
    display: flex;
    align-items: flex-end;
    height: 20px;
}

.dlg-tabs button {
    height: 18px;
    padding: 0 3px;
    background: #f0f0f0;
    border: 1px solid #ddd;
    border-bottom: 0;
}

.dlg-tabs .active {
    position: relative;
    height: 21px;
    padding: 0 6px;
    margin-bottom: -1px;
    background: #fff;
}

.page {
    border: 1px solid #ddd;
    padding: 5px 5px 21px 8px;
}

fieldset {
    min-width: 0;
    margin: 0;
    border: 1px solid #ddd;
}

legend {
    height: 15px;
    line-height: 15px;
    padding: 0 2px;
}

.off {
    color: #a8a8a8;
}

.field {
    width: 100%;
    min-width: 0;
    height: 20px;
    border: 1px solid #ccc;
    padding-left: 5px;
}

input.field {
    border-color: #777;
}

input.field:disabled {
    border-color: #ccc;
    background: #f0f0f0;
    color: #888;
}

.tight {
    padding-left: 0;
}

input.dark:disabled {
    background: #939393;
}

.gray {
    background-color: #d4d4d4;
    border-color: #d4d4d4;
}

.pattern {
    display: grid;
    grid-template-columns: 1fr 117px;
    gap: 11px 12px;
    align-items: center;
    padding: 12px 15px 11px 6px;
}

.pattern label {
    text-align: right;
}

.namebox {
    display: flex;
    gap: 2px;
}

.namebox button {
    width: 17px;
    border: 1px solid #bbb;
}

.sample {
    height: 28px;
    margin: 1px 0;
    border: 1px solid #666;
    border-right-color: #ddd;
    border-bottom-color: #ddd;
}

.sample svg {
    width: 100%;
    height: 100%;
}

.field-combo {
    height: 20px;
    padding-left: 4px;
}

.field-combo select {
    height: 18px;
    padding-left: 6px;
}

.field-combo .swatch, .field-combo .none {
    width: 17px;
    height: 17px;
    border: 1px solid #000;
}

.field-combo .red {
    background: #f00;
}

.origin {
    margin-top: 13px;
    padding: 0 0 13px 6px;
}

.choices {
    display: grid;
    grid-template-columns: 22px 1fr;
    gap: 11px 10px;
    align-items: center;
    justify-items: start;
    padding: 12px 0 0 52px;
}

.choices input {
    justify-self: end;
}

.icon {
    width: 22px;
    height: 22px;
    flex: none;
    display: grid;
    place-items: center;
    border: 1px solid #aaa;
    background: #f0f0f0;
}

.icon svg {
    width: 20px;
    height: 20px;
}

.inherit {
    display: flex;
    align-items: center;
    gap: 6px;
    padding: 12px 0 0 15px;
}

.row {
    display: flex;
    align-items: center;
    gap: 11px;
}

.grow {
    flex: 1;
}

.unit {
    width: 42px;
}

.bounds {
    display: grid;
    gap: 12px;
    padding: 6px 12px 7px 9px;
}

.bounds .row:nth-of-type(n+4) {
    gap: 6px;
}

.w100 {
    width: 100px;
}

.islands {
    margin-top: 10px;
    padding: 7px 9px 1px 4px;
}

.ring {
    width: 48px;
    height: 48px;
    margin: 0 0 6px 6px;
}

.islands .row, .options .row {
    gap: 4px;
    height: 14px;
}

.options {
    margin-top: 12px;
    padding: 5px 14px 14px 9px;
}

.options .row + .row {
    margin-top: 9px;
}

.opts {
    display: grid;
    grid-template-columns: 100px 1fr;
    gap: 11px 7px;
    align-items: center;
    margin-top: 14px;
}

.opts label {
    text-align: right;
    white-space: nowrap;
}

.slide {
    display: flex;
    gap: 8px;
    padding-right: 3px;
}

.slide .field {
    width: 40px;
}

input[type=checkbox], input[type=radio] {
    appearance: none;
    width: 13px;
    height: 13px;
    border: 1px solid #333;
    background: #fff;
}

input[type=radio] {
    border-radius: 50%;
}

input[type=radio]:checked {
    background: radial-gradient(circle, #333 0 3px, #fff 4px);
}

input[type=checkbox]:checked {
    background: url("data:image/svg+xml,%3Csvg xmlns='http://www.w3.org/2000/svg' width='11' height='11'%3E%3Cpath d='M2 5l3 3 5-6' fill='none' stroke='%23333'/%3E%3C/svg%3E");
}

input[type=checkbox]:disabled {
    opacity: .4;
}

input[type=range] {
    appearance: none;
    flex: 1;
    min-width: 0;
    background: linear-gradient(#ddd, #ddd) no-repeat center / 100% 3px;
}

input[type=range]::-webkit-slider-thumb {
    appearance: none;
    width: 11px;
    height: 19px;
    background: #0b76d6;
    clip-path: polygon(0 0, 100% 0, 100% 70%, 50% 100%, 0 70%);
}

.dlg-foot {
    margin-top: auto;
    display: flex;
    justify-content: flex-end;
    gap: 12px;
    padding: 0 11px 11px 0;
}

.btn {
    width: 73px;
    height: 21px;
    border: 1px solid #999;
    background: #fff;
}

.btn:disabled {
    color: #999;
    border-color: #bbb;
}

.list {
    height: 350px;
    display: flex;
    border: 1px solid #999;
    border-width: 1px 0;
    padding: 0 3px 0 1px;
    overflow: hidden;
}

.cells {
    flex: 1;
    display: grid;
    grid-template-columns: 124px 124px;
    grid-auto-rows: 62px;
    row-gap: 23px;
    padding-top: 1px;
    height: 348px;
    overflow: hidden;
}

.cells button {
    display: flex;
    flex-direction: column;
    align-items: center;
    padding-top: 2px;
    line-height: 19px;
}

.cells svg {
    width: 42px;
    height: 42px;
    overflow: hidden;
}

.cells .sel {
    background: #cce8ff;
}

.cells .hov {
    background: #e5f3ff;
}

.list .thumb {
    height: 25px;
    margin: 0 0 auto;
    background: #6b6b6b;
}

.palette-dlg .dlg-foot {
    gap: 8px;
    padding: 0 10px 7px 0;
}

.cursor {
    position: absolute;
    left: 1005px;
    top: 463px;
    width: 14px;
    height: 20px;
}
```
